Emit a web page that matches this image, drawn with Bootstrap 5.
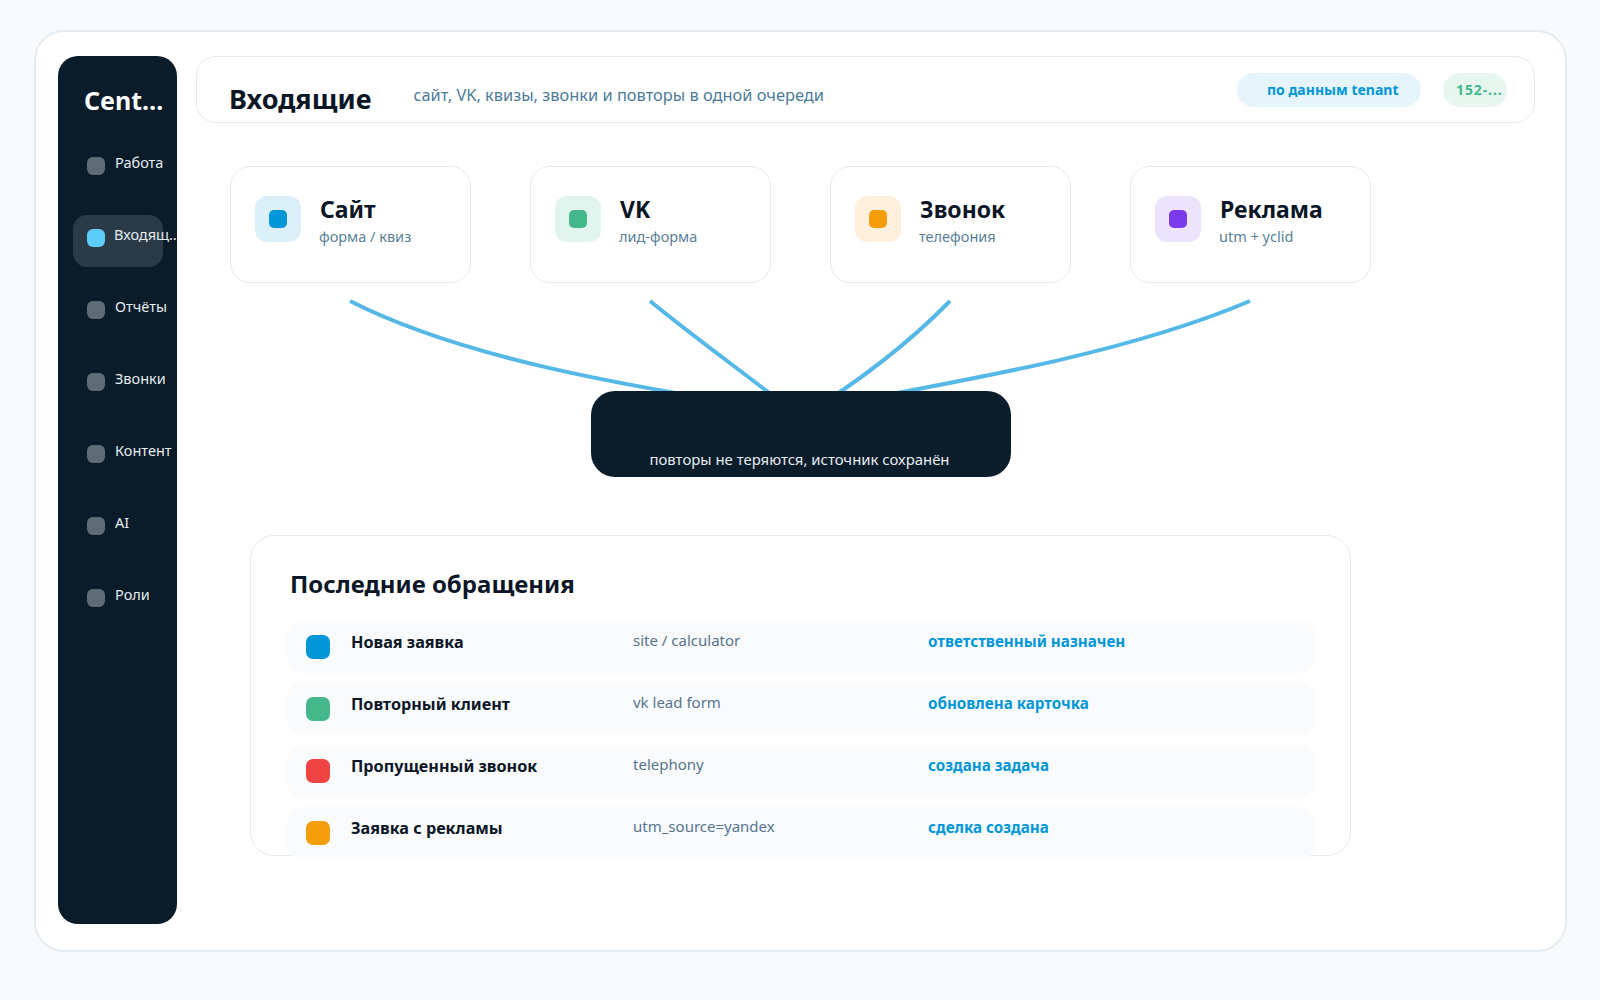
<!DOCTYPE html>
<html lang="ru">
<head>
<meta charset="UTF-8"/>
<title>Входящие</title>
<link href="https://cdn.jsdelivr.net/npm/bootstrap@5.3.0/dist/css/bootstrap.min.css" rel="stylesheet"/>
<style>
html, body { height: 1000px; overflow: hidden; }
body { background: #f8fbfc; font-family: "Noto Sans", "Open Sans", sans-serif; color: #0b1626; }
.app-shell { margin: 30px 33px 0 34px; height: 922px; background: #fff; border: 2px solid #e3ecf1; border-radius: 30px; padding: 24px 30px 26px 22px; }
.side-bar { width: 119px; background: #0a1b29; border-radius: 20px; overflow: hidden; padding: 28px 0 0 15px; flex: none; }
.side-logo { font-size: 25px; font-weight: 700; color: #fff; width: 80px; margin-left: 11px; margin-bottom: 27px; line-height: 32px; white-space: nowrap; overflow: hidden; text-overflow: ellipsis; }
.side-item { width: 90px; height: 52px; border-radius: 14px; padding: 14px; margin-bottom: 20px; color: #e6edf2; font-size: 14.5px; white-space: nowrap; gap: 10px; }
.side-item.is-on { background: #2a3a46; }
.side-dot { width: 18px; height: 18px; border-radius: 6px; background: #5f6c76; flex: none; }
.is-on .side-dot { background: #5fcdfb; }
.side-text { flex: none; line-height: 20px; margin-top: -5px; max-width: 67.5px; overflow: hidden; text-overflow: ellipsis; }
.is-on .side-text { margin-left: -1px; }
.main-col { margin-left: 19px; min-width: 0; }
.top-panel { height: 67px; border: 1px solid #e3ecf1; border-radius: 20px; padding: 0 27px 0 32px; }
.top-title { font-size: 27px; font-weight: 700; margin: 20px 0 0; line-height: 44px; }
.top-sub { font-size: 16.4px; color: #4d7c99; margin-left: 42px; margin-top: 22px; line-height: 32px; }
.pill-a, .pill-b { height: 34px; border-radius: 17px; font-size: 14px; font-weight: 700; line-height: 34px; flex: none; }
.pill-a { width: 184px; background: #e6f5fc; color: #0096d8; padding-left: 30px; }
.pill-b { width: 64px; background: #e7f6ef; color: #44b88b; padding-left: 13px; margin-left: 22px; overflow: hidden; white-space: nowrap; letter-spacing: .9px; }
.stage { width: 1141px; margin: 43px 0 0 34px; position: relative; }
.link-lines { position: absolute; left: 0; top: 0; width: 1140px; height: 320px; }
.src-row { gap: 59px; }
.src-card { width: 241px; height: 117px; border: 1px solid #e3ecf1; border-radius: 20px; padding: 29px 24px; }
.src-icon { width: 46px; height: 46px; border-radius: 12px; flex: none; }
.src-icon i { display: block; width: 18px; height: 18px; border-radius: 5px; }
.src-body { margin-left: 2px; }
.src-name { font-size: 23px; font-weight: 700; line-height: 30px; margin: -2px 0 0 1px; }
.src-note { font-size: 14.5px; color: #5a7f98; line-height: 20px; margin-top: 2px; }
.hub-box { position: relative; width: 420px; height: 86px; margin: 108px auto 0; background: #0b1c2a; border-radius: 24px; color: #e6edf2; font-size: 14.9px; text-align: center; padding: 57px 2px 0 0; line-height: 22px; }
.feed-panel { width: 1101px; height: 321px; margin: 58px auto 0; border: 1px solid #e3ecf1; border-radius: 24px; padding: 31px 35px 0 36px; }
.feed-title { font-size: 24px; font-weight: 700; margin: 0 0 20px 3px; line-height: 34px; }
.feed-row { height: 52px; border-radius: 14px; background: #f9fbfd; margin-bottom: 10px; padding: 14px 19px; }
.feed-dot { width: 24px; height: 24px; border-radius: 7px; flex: none; }
.feed-name { width: 282px; margin-left: 21px; margin-top: -4px; font-size: 16.2px; font-weight: 700; line-height: 22px; }
.feed-src { width: 295px; margin-top: -6px; font-size: 15px; color: #56748c; line-height: 22px; }
.feed-act { margin-top: -5px; font-size: 15.2px; font-weight: 700; color: #0096d8; line-height: 22px; }
</style>
</head>
<body>
<div class="app-shell d-flex">
  <aside class="side-bar">
    <div class="side-logo">Centerline</div>
    <div class="side-item d-flex"><span class="side-dot"></span><span class="side-text">Работа</span></div>
    <div class="side-item is-on d-flex"><span class="side-dot"></span><span class="side-text">Входящие</span></div>
    <div class="side-item d-flex"><span class="side-dot"></span><span class="side-text">Отчёты</span></div>
    <div class="side-item d-flex"><span class="side-dot"></span><span class="side-text">Звонки</span></div>
    <div class="side-item d-flex"><span class="side-dot"></span><span class="side-text">Контент</span></div>
    <div class="side-item d-flex"><span class="side-dot"></span><span class="side-text">AI</span></div>
    <div class="side-item d-flex"><span class="side-dot"></span><span class="side-text">Роли</span></div>
  </aside>
  <main class="flex-grow-1 main-col">
    <header class="top-panel d-flex align-items-start">
      <h1 class="top-title">Входящие</h1>
      <div class="top-sub">сайт, VK, квизы, звонки и повторы в одной очереди</div>
      <div class="ms-auto d-flex align-items-center h-100">
        <span class="pill-a">по данным tenant</span>
        <span class="pill-b">152-...</span>
      </div>
    </header>
    <div class="stage">
      <svg class="link-lines" viewBox="0 0 1140 320" fill="none" stroke="#55b8e6" stroke-width="4">
        <path d="M120 135 C 230 191, 390 220, 570 247"/>
        <path d="M420 135 C 470 176, 520 211, 570 251"/>
        <path d="M720 135 C 680 176, 630 215, 570 252"/>
        <path d="M1020 135 C 900 186, 750 212, 570 245"/>
      </svg>
      <div class="src-row d-flex position-relative">
        <div class="src-card d-flex gap-3"><div class="src-icon d-flex align-items-center justify-content-center" style="background:#dcf0fa"><i style="background:#0096d8"></i></div><div class="src-body"><div class="src-name">Сайт</div><div class="src-note">форма / квиз</div></div></div>
        <div class="src-card d-flex gap-3"><div class="src-icon d-flex align-items-center justify-content-center" style="background:#e1f4ed"><i style="background:#44b88b"></i></div><div class="src-body"><div class="src-name">VK</div><div class="src-note">лид-форма</div></div></div>
        <div class="src-card d-flex gap-3"><div class="src-icon d-flex align-items-center justify-content-center" style="background:#fef0dc"><i style="background:#f59e0b"></i></div><div class="src-body"><div class="src-name">Звонок</div><div class="src-note">телефония</div></div></div>
        <div class="src-card d-flex gap-3"><div class="src-icon d-flex align-items-center justify-content-center" style="background:#ece3fc"><i style="background:#7c3aed"></i></div><div class="src-body"><div class="src-name">Реклама</div><div class="src-note">utm + yclid</div></div></div>
      </div>
      <div class="hub-box">повторы не теряются, источник сохранён</div>
      <section class="feed-panel">
        <h2 class="feed-title">Последние обращения</h2>
        <div class="feed-row d-flex"><span class="feed-dot" style="background:#0096d8"></span><span class="feed-name">Новая заявка</span><span class="feed-src">site / calculator</span><span class="feed-act">ответственный назначен</span></div>
        <div class="feed-row d-flex"><span class="feed-dot" style="background:#44b88b"></span><span class="feed-name">Повторный клиент</span><span class="feed-src">vk lead form</span><span class="feed-act">обновлена карточка</span></div>
        <div class="feed-row d-flex"><span class="feed-dot" style="background:#ef4444"></span><span class="feed-name">Пропущенный звонок</span><span class="feed-src">telephony</span><span class="feed-act">создана задача</span></div>
        <div class="feed-row d-flex"><span class="feed-dot" style="background:#f59e0b"></span><span class="feed-name">Заявка с рекламы</span><span class="feed-src">utm_source=yandex</span><span class="feed-act">сделка создана</span></div>
      </section>
    </div>
  </main>
</div>
</body>
</html>
